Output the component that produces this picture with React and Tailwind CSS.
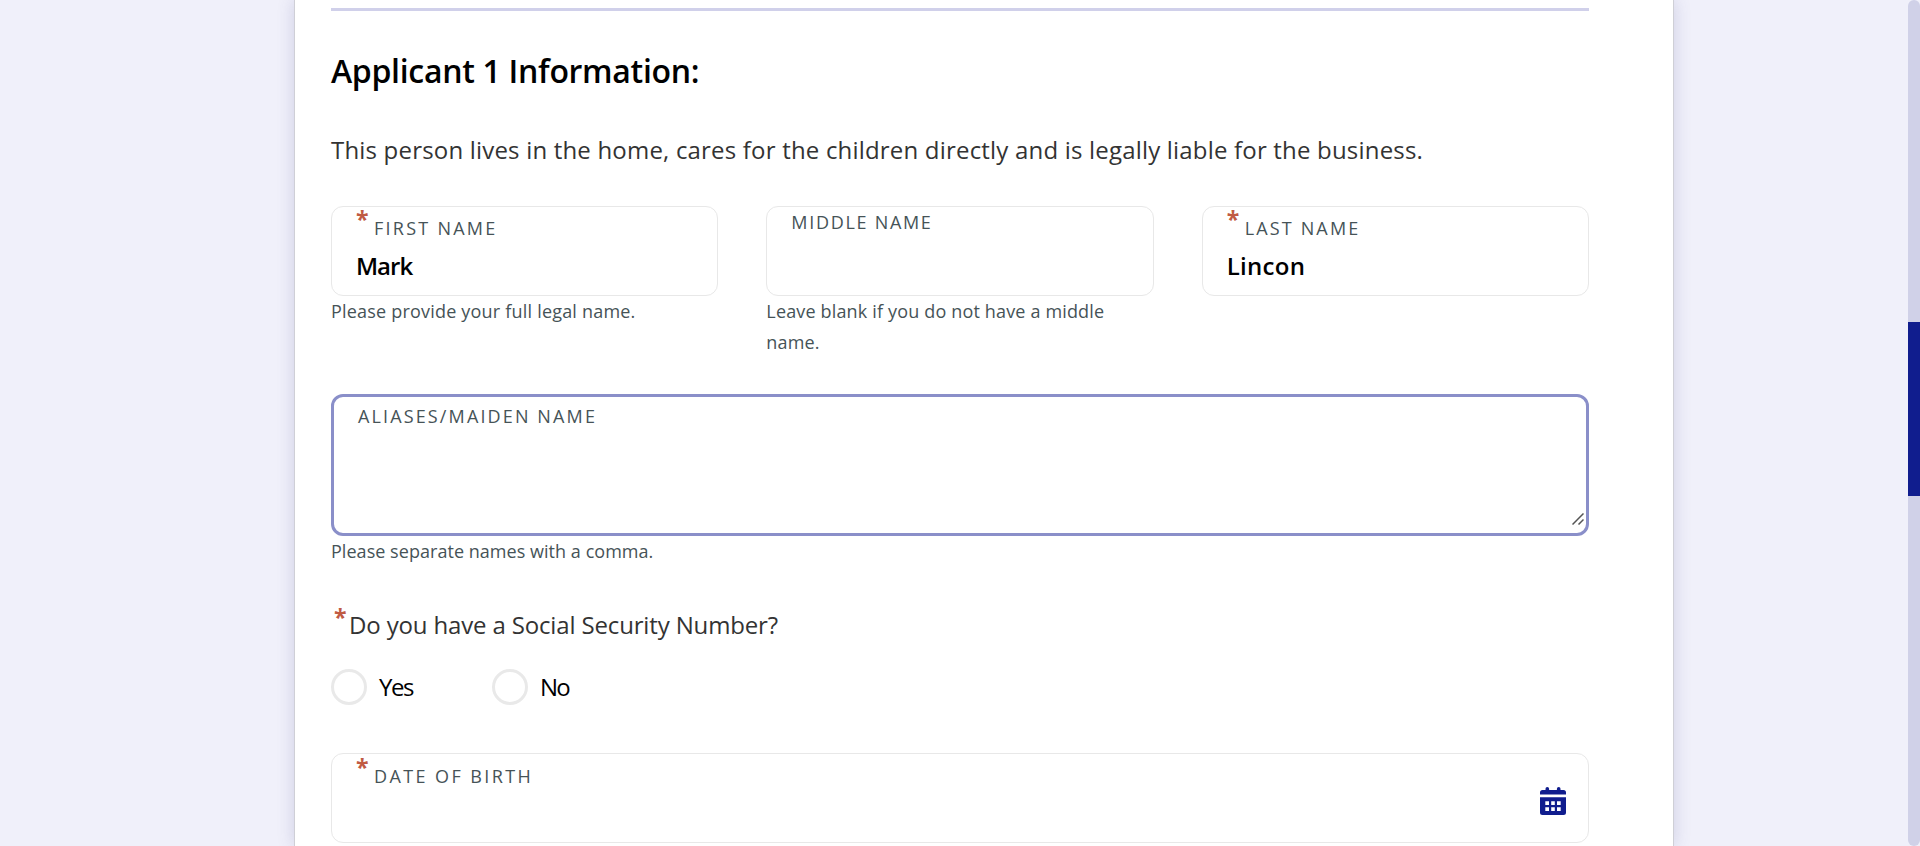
function Star({ className = "" }) {
  return (
    <span className={`block h-6 w-3 shrink-0 text-[23px] leading-6 font-bold text-[#c05a43] ${className}`}>*</span>
  );
}

function Label({ children, required, className = "" }) {
  return (
    <div className="flex h-7 items-start">
      {required && <Star className="mt-[-2px] mr-[6px]" />}
      <span className={`text-[18px] leading-6 text-[#465357] uppercase whitespace-nowrap ${required ? "mt-[7px]" : "mt-[1px]"} ${className}`}>
        {children}
      </span>
    </div>
  );
}

function TextField({ label, required, value, hint, labelClass, valueClass = "", hintClass = "" }) {
  return (
    <div className="min-w-0 flex-1">
      <div className="h-[90px] rounded-xl border border-[#e8e8e8] bg-white pt-[2px] pl-6">
        <Label required={required} className={labelClass}>{label}</Label>
        <div className={`mt-[13px] text-[24px] leading-8 font-semibold text-black ${valueClass}`}>{value}</div>
      </div>
      {hint && <p className={`text-[18px] leading-[31px] text-[#465357] ${hintClass}`}>{hint}</p>}
    </div>
  );
}

function Radio({ label, className = "" }) {
  return (
    <label className="flex w-[161px] items-center">
      <span className="size-9 rounded-full border-[3px] border-[#e9e9e9] bg-white" />
      <span className={`ml-3 text-[24px] leading-9 text-black ${className}`}>{label}</span>
    </label>
  );
}

function CalendarIcon() {
  return (
    <svg className="mt-[33px] mr-[22px] h-7 w-[26px]" viewBox="0 0 26 28" fill="#101d8e">
      <path d="M0 7.500V5.500A2.500 2.500 0 0 1 2.500 3H5.500V1.800a1.800 1.800 0 0 1 3.600 0V3h7.800V1.800a1.800 1.800 0 0 1 3.600 0V3h3A2.500 2.500 0 0 1 26 5.500V7.500Z" />
      <path fillRule="evenodd" d="M0 10.200h26V25.500A2.500 2.500 0 0 1 23.500 28h-21A2.500 2.500 0 0 1 0 25.500ZM5.300 14.300v3.700h3.700v-3.700ZM11.200 14.300v3.700h3.600v-3.700ZM17 14.300v3.700h3.700v-3.700ZM5.300 20.300v3.700h3.700v-3.700ZM11.200 20.300v3.700h3.600v-3.700ZM17 20.300v3.700h3.700v-3.700Z" />
    </svg>
  );
}

export default function App() {
  return (
    <div className="flex h-[846px] w-full overflow-hidden bg-[#f0f0fa] font-['Open_Sans','Noto_Sans',sans-serif]">
      <main className="ml-[294px] w-[1380px] border-x border-[#cfcfd6] bg-white pt-2 pl-9 shadow-[0_0_16px_rgba(70,70,140,0.2)]">
        <div className="w-[1258px]">
          <hr className="h-[3px] border-0 bg-[#d0d0ea]" />
          <h2 className="mt-9 text-[32px] leading-12 font-semibold tracking-[-0.3px] text-black">Applicant 1 Information:</h2>
          <p className="mt-[35px] text-[24px] leading-10 tracking-[0.19px] whitespace-nowrap text-[#333333]">
            This person lives in the home, cares for the children directly and is legally liable for the business.
          </p>
          <div className="mt-9 flex h-[188px] gap-12">
            <TextField label="First Name" required value="Mark" hint="Please provide your full legal name."
              labelClass="tracking-[2.25px]" valueClass="tracking-[-1px]" hintClass="tracking-[0.2px]" />
            <TextField label="Middle Name" hint="Leave blank if you do not have a middle name."
              labelClass="tracking-[1.7px]" hintClass="tracking-[0.16px]" />
            <TextField label="Last Name" required value="Lincon" labelClass="tracking-[2.15px]" valueClass="tracking-[0.3px]" />
          </div>
          <div className="flex h-[142px] justify-between rounded-xl border-[3px] border-[#8a8fc9] bg-white pt-[6px] pl-6">
            <Label className="tracking-[2.13px]">Aliases/Maiden Name</Label>
            <svg className="mr-[2px] mb-[8px] h-3 w-3 self-end" viewBox="0 0 12 12" stroke="#555" strokeWidth="1.500">
              <path d="M.5 11.500 11.500.5M6.500 11.500l5-5" />
            </svg>
          </div>
          <p className="text-[18px] leading-[31px] tracking-[0.04px] text-[#465357]">Please separate names with a comma.</p>
          <div className="mt-[38px] flex h-10 items-start pl-[3px]">
            <Star />
            <p className="ml-[3px] text-[24px] leading-10 tracking-[-0.15px] text-[#333333]">Do you have a Social Security Number?</p>
          </div>
          <div className="mt-6 flex">
            <Radio label="Yes" className="tracking-[-1.5px]" />
            <Radio label="No" className="tracking-[-1.8px]" />
          </div>
          <div className="mt-12 flex h-[90px] justify-between rounded-xl border border-[#e8e8e8] bg-white">
            <div className="pt-[3px] pl-6">
              <Label required className="tracking-[2.4px]">Date of Birth</Label>
            </div>
            <CalendarIcon />
          </div>
        </div>
      </main>
      <div className="ml-auto h-full w-3 rounded-lg bg-[#d0d1e8] pt-[322px]">
        <div className="h-[174px] bg-[#101d8e]" />
      </div>
    </div>
  );
}
